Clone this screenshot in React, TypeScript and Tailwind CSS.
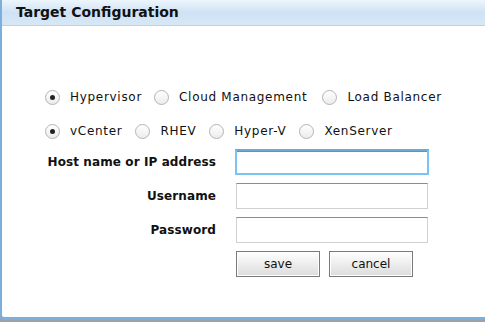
import React from 'react';

const Radio: React.FC<{ label: string; checked?: boolean }> = ({ label, checked }) => (
  <label className="flex items-center gap-[10px]">
    <span className="flex h-[15px] w-[15px] items-center justify-center rounded-full border border-[#b4b4b4] bg-gradient-to-b from-[#ffffff] to-[#ececec]">
      {checked && <span className="h-[5px] w-[5px] rounded-full bg-[#222]" />}
    </span>
    <span className="text-[12px] tracking-[0.7px] text-[#111]">{label}</span>
  </label>
);

const Field: React.FC<{ label: string; focused?: boolean }> = ({ label, focused }) => (
  <>
    <div className="text-right text-[12px] font-bold tracking-[0.1px] text-[#111]">{label}</div>
    <input
      type="text"
      className={
        focused
          ? 'h-[26px] w-[194px] border-2 border-[#7cc3f5] border-t-[#6aa9d8] bg-white outline-none shadow-[inset_0_1px_0_#888]'
          : 'h-[26px] w-[192px] ml-[1px] border border-[#d0d0d0] border-t-[#8c8c8c] bg-white outline-none'
      }
    />
  </>
);

const Button: React.FC<{ label: string }> = ({ label }) => (
  <button className="h-[26px] w-[84px] border border-[#7a7a7a] bg-gradient-to-b from-[#ffffff] to-[#dcdcdc] text-[12px] text-[#111] shadow-[inset_0_0_0_1px_#fff]">
    {label}
  </button>
);

export default function App() {
  return (
    <div className="h-[322px] w-[485px] overflow-hidden bg-[#9aa3ad]" style={{ fontFamily: '"DejaVu Sans", Verdana, sans-serif' }}>
      <div className="flex h-[320px] flex-col rounded-bl-[5px] border-b-[3px] border-l-2 border-[#7cb0dc] bg-white">
        <div className="flex h-[26px] items-center border-b border-[#c6cde0] bg-gradient-to-b from-[#eef5fc] via-[#cfe2f4] to-[#d7e7f6] pl-[14px]">
          <span className="text-[14px] font-bold text-[#111]">Target Configuration</span>
        </div>

        <div className="pl-[43px] pt-[62px]">
          <div className="flex items-center">
            <Radio label="Hypervisor" checked />
            <div className="w-[12px]" />
            <Radio label="Cloud Management" />
            <div className="w-[15px]" />
            <Radio label="Load Balancer" />
          </div>
          <div className="mt-[16px] flex items-center gap-[13px]">
            <Radio label="vCenter" checked />
            <Radio label="RHEV" />
            <Radio label="Hyper-V" />
            <Radio label="XenServer" />
          </div>
        </div>

        <div className="mt-[9px] grid w-[430px] grid-cols-[214px_auto] items-center gap-x-[19px] gap-y-[8px]">
          <Field label="Host name or IP address" focused />
          <Field label="Username" />
          <Field label="Password" />
          <div />
          <div className="ml-[1px] flex gap-[9px]">
            <Button label="save" />
            <Button label="cancel" />
          </div>
        </div>
      </div>
    </div>
  );
}
